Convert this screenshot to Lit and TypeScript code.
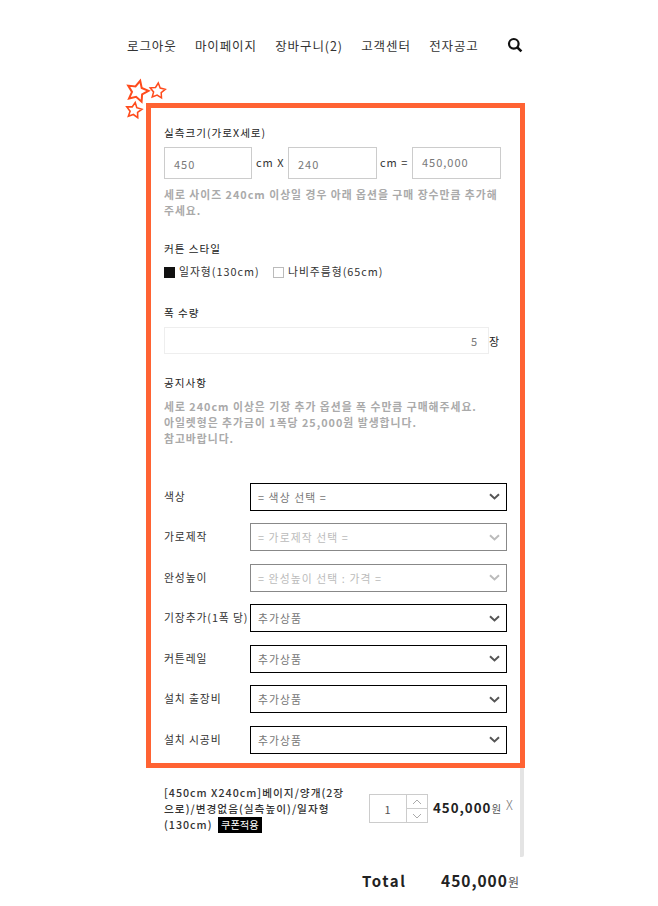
import { LitElement, html, css, svg } from "lit";
import { customElement } from "lit/decorators.js";

const star = (cx: number, cy: number, r: number, w: number, rot: number) => {
  const pts: string[] = [];
  for (let i = 0; i < 10; i++) {
    const a = -Math.PI / 2 + (i * Math.PI) / 5 + rot;
    const rr = i % 2 ? r * 0.5 : r;
    pts.push(`${(cx + rr * Math.cos(a)).toFixed(1)},${(cy + rr * Math.sin(a)).toFixed(1)}`);
  }
  return svg`<polygon points=${pts.join(" ")} fill="none" stroke="#ff4b1c" stroke-width=${w} stroke-linejoin="miter"/>`;
};

const chevron = html`<svg class="chev" width="11" height="7" viewBox="0 0 11 7"><path d="M1 1.2 5.5 5.4 10 1.2" fill="none" stroke="currentColor" stroke-width="2"/></svg>`;

const rows = [
  { label: "색상", text: "= 색상 선택 =", off: false },
  { label: "가로제작", text: "= 가로제작 선택 =", off: true },
  { label: "완성높이", text: "= 완성높이 선택 : 가격 =", off: true },
  { label: "기장추가(1폭 당)", text: "추가상품", off: false },
  { label: "커튼레일", text: "추가상품", off: false },
  { label: "설치 출장비", text: "추가상품", off: false },
  { label: "설치 시공비", text: "추가상품", off: false },
];

@customElement("app-root")
export class AppRoot extends LitElement {
  static styles = css`
    :host {
      display: block;
      width: 658px;
      height: 906px;
      overflow: hidden;
      background: #fff;
      color: #222;
      font-family: "Noto Sans CJK KR", "Noto Sans", sans-serif;
      font-size: 11px;
      letter-spacing: 1px;
    }
    .nav {
      display: flex;
      align-items: center;
      height: 90px;
      padding: 0 0 0 127px;
      font-size: 12.5px;
      color: #333;
      letter-spacing: 0.9px;
    }
    .nav span { margin-right: 18.3px; white-space: nowrap; }
    .nav svg { margin-left: 10px; }
    .wrap { position: relative; margin-left: 146px; width: 379px; }
    .stars { position: absolute; left: -24px; top: -25px; }
    .frame {
      box-sizing: border-box;
      margin-top: 13px;
      height: 665px;
      border: 5px solid #ff6333;
      padding: 16px 13px 0;
    }
    .lab { height: 16px; line-height: 16px; font-size: 10.6px; font-weight: 400; color: #222; white-space: nowrap; }
    .lab.first { line-height: 18px; }
    .sizes { display: flex; align-items: center; margin-top: 7px; height: 32px; }
    .box {
      box-sizing: border-box;
      height: 32px;
      border: 1px solid #ccc;
      color: #777;
      display: flex;
      align-items: center;
      font-size: 11px;
      padding: 1px 0 0 9px;
    }
    .box.w88 { width: 88px; }
    .box.w89 { width: 89px; }
    .box.high { padding: 0 0 2px 9px; }
    .unit { box-sizing: border-box; font-size: 11px; color: #333; margin-top: -3px; white-space: nowrap; }
    .unit.a { width: 36px; padding-left: 4px; }
    .unit.b { width: 35px; padding-left: 3px; }
    .hint { color: #aaa; font-weight: 700; line-height: 16px; margin-top: 7px; font-size: 10.8px; letter-spacing: 1px; white-space: nowrap; }
    .mt-style { margin-top: 23px; }
    .mt-qty { margin-top: 26px; }
    .mt-note { margin-top: 21px; }
    .style { display: flex; align-items: center; height: 16px; margin-top: 6px; color: #333; font-size: 10.8px; }
    .chk { box-sizing: border-box; width: 11px; height: 11px; margin-top: 3px; margin-right: 4px; border: 1px solid #bbb; }
    .chk.on { background: #111; border-color: #111; }
    .lbl1 { width: 94px; }
    .qty { display: flex; align-items: center; margin-top: 6px; }
    .qty .field {
      box-sizing: border-box; width: 325px; height: 27px; border: 1px solid #eee;
      display: flex; align-items: center; justify-content: flex-end; padding-right: 10px; color: #777;
    }
    .rows { margin-top: 36.9px; display: flex; flex-direction: column; gap: 12.5px; }
    .row { display: flex; height: 28px; }
    .row .name { width: 86px; flex: none; white-space: nowrap; line-height: 26px; color: #333; font-size: 10.8px; letter-spacing: 0.9px; }
    .sel {
      box-sizing: border-box; width: 257px; height: 28px; border: 1.5px solid #000;
      display: flex; align-items: center; justify-content: space-between;
      padding: 0 6px 0 7px; color: #777; font-size: 10.8px; letter-spacing: 1.1px;
    }
    .sel.off { border-color: #888; color: #bbb; }
    .sel .chev { color: #555; }
    .sel.off .chev { color: #bbb; }
    .below { position: relative; height: 89px; border-right: 4px solid #e4e4e4; border-radius: 0 0 2px 0; box-sizing: border-box; width: 378px; padding: 17px 0 0 18px; display: flex; }
    .pname { width: 190px; font-size: 10.7px; font-weight: 500; line-height: 16px; height: 48px; color: #333; margin: 0 15px 0 0; flex: none; letter-spacing: 1px; }
    .coupon { display: inline-block; vertical-align: top; background: #000; color: #fff; font-size: 10.3px; line-height: 16px; padding: 0 3px; margin-left: 2px; letter-spacing: 0; font-weight: 400; }
    .stepper { box-sizing: border-box; display: flex; width: 59px; height: 29px; border: 1px solid #ccc; margin-top: 9px; flex: none; }
    .stepper .n { flex: 1; display: flex; align-items: center; justify-content: center; color: #555; }
    .stepper .arrows { width: 20px; border-left: 1px solid #ccc; display: flex; flex-direction: column; }
    .arrows div { flex: 1; display: flex; align-items: center; justify-content: center; }
    .arrows div + div { border-top: 1px solid #ccc; }
    .price { margin-left: 5px; margin-top: 13px; white-space: nowrap; font-size: 13.3px; font-weight: 700; color: #222; line-height: 20px; }
    .price small { font-size: 10.5px; font-weight: 400; color: #555; letter-spacing: 0; }
    .x { margin-left: 5px; margin-top: 10px; color: #777; font-size: 12.5px; font-weight: 300; line-height: 20px; }
    .total { display: flex; align-items: baseline; margin-left: 362px; margin-top: 11px; font-weight: 700; white-space: nowrap; color: #222; line-height: 24px; }
    .total .t { font-size: 15px; width: 79px; letter-spacing: 1.6px; }
    .total .v { font-size: 15.5px; }
    .total small { font-size: 12px; font-weight: 400; color: #555; letter-spacing: 0; }
  `;

  render() {
    return html`
      <div class="nav">
        <span>로그아웃</span><span>마이페이지</span><span>장바구니(2)</span><span>고객센터</span><span>전자공고</span>
        <svg width="16" height="16" viewBox="0 0 16 16"><circle cx="6.8" cy="6.8" r="4.8" fill="none" stroke="#111" stroke-width="2.2"/><path d="M10.3 10.3 14.4 14.4" stroke="#111" stroke-width="2.6"/></svg>
      </div>
      <div class="wrap">
        <svg class="stars" width="46" height="42" viewBox="0 0 46 42">
          ${star(15.5, 13.5, 11, 2, 0.25)}${star(35.5, 13, 8, 1.5, 0.1)}${star(12, 32.5, 8, 1.6, 0.15)}
        </svg>
        <div class="frame">
          <div class="lab first">실측크기(가로X세로)</div>
          <div class="sizes">
            <div class="box w88">450</div>
            <div class="unit a">cm X</div>
            <div class="box w89">240</div>
            <div class="unit b">cm =</div>
            <div class="box w89 high">450,000</div>
          </div>
          <div class="hint">세로 사이즈 240cm 이상일 경우 아래 옵션을 구매 장수만큼 추가해<br />주세요.</div>
          <div class="lab mt-style">커튼 스타일</div>
          <div class="style">
            <div class="chk on"></div><span class="lbl1">일자형(130cm)</span>
            <div class="chk"></div><span>나비주름형(65cm)</span>
          </div>
          <div class="lab mt-qty">폭 수량</div>
          <div class="qty"><div class="field">5</div><span>장</span></div>
          <div class="lab mt-note">공지사항</div>
          <div class="hint">세로 240cm 이상은 기장 추가 옵션을 폭 수만큼 구매해주세요.<br />아일렛형은 추가금이 1폭당 25,000원 발생합니다.<br />참고바랍니다.</div>
          <div class="rows">
            ${rows.map(
              (r) => html`<div class="row">
                <div class="name">${r.label}</div>
                <div class="sel ${r.off ? "off" : ""}"><span>${r.text}</span>${chevron}</div>
              </div>`
            )}
          </div>
        </div>
        <div class="below">
          <div class="pname">[450cm X240cm]베이지/양개(2장<br />으로)/변경없음(실측높이)/일자형<br />(130cm) <span class="coupon">쿠폰적용</span></div>
          <div class="stepper">
            <div class="n">1</div>
            <div class="arrows">
              <div><svg width="10" height="6" viewBox="0 0 10 6"><path d="M1 5 5 1 9 5" fill="none" stroke="#aaa"/></svg></div>
              <div><svg width="10" height="6" viewBox="0 0 10 6"><path d="M1 1 5 5 9 1" fill="none" stroke="#aaa"/></svg></div>
            </div>
          </div>
          <div class="price">450,000<small>원</small></div>
          <div class="x">X</div>
        </div>
      </div>
      <div class="total"><span class="t">Total</span><span class="v">450,000</span><small>원</small></div>
    `;
  }
}
